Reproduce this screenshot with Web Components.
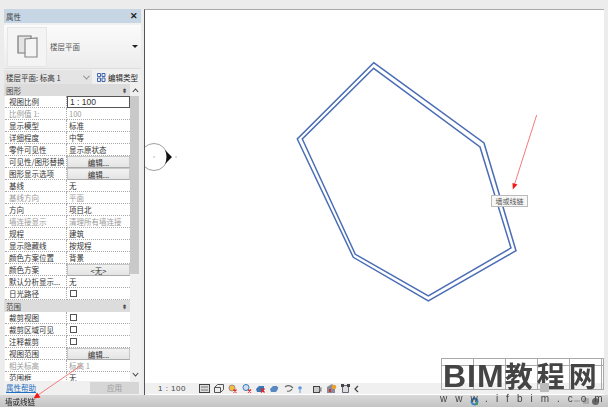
<!DOCTYPE html>
<html lang="zh"><head><meta charset="utf-8"><title>属性</title>
<style>
html,body{margin:0;padding:0;background:#ececec}
body{width:608px;height:407px;overflow:hidden;font:7.5px "Noto Sans CJK SC","Liberation Sans",sans-serif;color:#333}
</style></head><body>
<x-app>
  <x-props slot="left">
    <x-row kind="active">视图比例<span slot="v">1 : 100</span></x-row>
    <x-row dim>比例值 1:<span slot="v">100</span></x-row>
    <x-row>显示模型<span slot="v">标准</span></x-row>
    <x-row>详细程度<span slot="v">中等</span></x-row>
    <x-row>零件可见性<span slot="v">显示原状态</span></x-row>
    <x-row kind="btn">可见性/图形替换<span slot="v">编辑...</span></x-row>
    <x-row kind="btn">图形显示选项<span slot="v">编辑...</span></x-row>
    <x-row>基线<span slot="v">无</span></x-row>
    <x-row dim>基线方向<span slot="v">平面</span></x-row>
    <x-row>方向<span slot="v">项目北</span></x-row>
    <x-row dim>墙连接显示<span slot="v">清理所有墙连接</span></x-row>
    <x-row>规程<span slot="v">建筑</span></x-row>
    <x-row>显示隐藏线<span slot="v">按规程</span></x-row>
    <x-row>颜色方案位置<span slot="v">背景</span></x-row>
    <x-row kind="btn">颜色方案<span slot="v">&lt;无&gt;</span></x-row>
    <x-row>默认分析显示...<span slot="v">无</span></x-row>
    <x-row kind="check">日光路径</x-row>
    <x-group>范围</x-group>
    <x-row kind="check">裁剪视图</x-row>
    <x-row kind="check">裁剪区域可见</x-row>
    <x-row kind="check">注释裁剪</x-row>
    <x-row kind="btn">视图范围<span slot="v">编辑...</span></x-row>
    <x-row dim>相关标高<span slot="v">标高 1</span></x-row>
    <x-row>范围框<span slot="v">无</span></x-row>
  </x-props>
  <x-view slot="right"></x-view>
  <x-status slot="bottom">墙或线链</x-status>
  <x-mark slot="over"></x-mark>
</x-app>
<template id="t-app"><style>
:host{display:block;position:relative;width:608px;height:407px;overflow:hidden;filter:blur(.45px)}
.top{display:grid;grid-template-columns:137px 460px;column-gap:3px;padding:9px 4px 0 4px;height:395px;box-sizing:border-box}
</style><div class="top"><slot name="left"></slot><slot name="right"></slot></div><slot name="bottom"></slot><slot name="over"></slot>
<svg style="position:absolute;left:0;top:0;pointer-events:none" width="608" height="407" viewBox="0 0 608 407">
<g stroke="#f47a7a" stroke-width="1" fill="#f01818"><path d="M536.7 115 514 186" fill="none"/><path d="M512.8 189.5 512.500 183 517.500 184.500Z" stroke="none"/>
<path d="M81.7 365 38 395" fill="none"/><path d="M33.5 398.5 37 392.5 40.5 397.5Z" stroke="none"/></g></svg>
</template>
<template id="t-props"><style>
:host{display:flex;flex-direction:column;background:#f0f0f0;height:386px;overflow:hidden}
.head{height:14px;background:#c6d6e4;display:flex;align-items:center;justify-content:space-between;padding:0 3px 0 2px;font-size:7.5px;color:#444;flex:none}
.head b{font:bold 9px "Liberation Sans",sans-serif;color:#222}
.type{height:44px;margin-top:2px;flex:none;background:linear-gradient(#fbfbfb,#ececec);display:flex;align-items:center;gap:3px;padding:0 3px;box-sizing:border-box;border-bottom:1px solid #ddd}
.tile{width:40px;height:40px;background:#f4f4f4;border:1px solid #e6e6e6;box-sizing:border-box;display:flex;align-items:center;justify-content:center;flex:none}
.type span{flex:1;margin-left:0;color:#555}
.caret{width:0;height:0;border:3px solid transparent;border-top:3.5px solid #222;border-bottom:0}
.sel{display:flex;height:14px;margin-top:1px;flex:none}
.dd{width:88px;background:#e4e4e4;display:flex;align-items:center;justify-content:space-between;padding:0 3px 0 2px;box-sizing:border-box}
.dd i{width:4px;height:4px;border:solid #888;border-width:0 1px 1px 0;transform:rotate(45deg) translate(-1px,-1px);display:block}
.et{flex:1;display:flex;align-items:center;gap:2px;padding-left:5px;color:#222;white-space:nowrap}
.body{display:grid;grid-template-columns:126px 11px;height:297px;flex:none}
.rows{display:flex;flex-direction:column;height:297px;overflow:hidden}
.gh{height:12px;background:#dcdcdc;display:flex;align-items:center;justify-content:space-between;padding:0 3px 0 2px;flex:none;color:#444}
.gh s{text-decoration:none;font:bold 6px "Liberation Sans",sans-serif}
.sb{background:#f0f0f0;display:flex;flex-direction:column;align-items:stretch}
.ar{height:12px;display:flex;align-items:center;justify-content:center;flex:none}
.thumb{height:178px;background:#c9c9c9;margin-right:2px;flex:none}
.foot{height:13px;display:flex;align-items:center;justify-content:space-between;padding:0 2px;flex:none}
.foot a{color:#1f6fc0;text-decoration:underline}
.foot span{width:49px;height:12px;background:#d6d6d6;color:#9a9a9a;display:flex;align-items:center;justify-content:center}
</style>
<div class="head"><span>属性</span><b>✕</b></div>
<div class="type"><div class="tile"><svg width="21" height="23" viewBox="0 0 21 23"><path d="M1 18V1h13v17Z" fill="#e4e4e4" stroke="#777" stroke-width="1.200"/><path d="M8 22V4l12-1v19Z" fill="#f4f4f4" stroke="#888" stroke-width="1.200"/></svg></div><span>楼层平面</span><div class="caret"></div></div>
<div class="sel"><div class="dd">楼层平面: 标高 1<i></i></div><div class="et"><svg width="9" height="9" viewBox="0 0 9 9"><path d="M.5.500h3v3h-3zM5 .5h3v3H5zM.5 5h3v3.500h-3zM5 5h3v3.500H5z" fill="#e8f0f8" stroke="#46a"/></svg><span>编辑类型</span></div></div>
<div class="body"><div class="rows"><div class="gh">图形<s>⇞</s></div><slot></slot></div>
<div class="sb"><div class="ar"><svg width="7" height="5"><path d="M.8 4 3.500 1 6.200 4" fill="none" stroke="#444" stroke-width="1.100"/></svg></div><div class="thumb"></div><div style="flex:1"></div><div class="ar" style="margin-bottom:1px"><svg width="7" height="5"><path d="M.8 1 3.500 4 6.200 1" fill="none" stroke="#444" stroke-width="1.100"/></svg></div></div></div>
<div class="foot"><a>属性帮助</a><span>应用</span></div>
</template>
<template id="t-group"><style>
:host{display:flex;height:12px;background:#dcdcdc;align-items:center;justify-content:space-between;padding:0 3px 0 2px;flex:none;color:#444;box-sizing:border-box;font-size:7.5px}
s{text-decoration:none;font:bold 6px "Liberation Sans",sans-serif}
</style><slot></slot><s>⇞</s></template>
<template id="t-row"><style>
:host{display:grid;grid-template-columns:62px 63px;height:12px;flex:none;background:#f0f0f0;padding-left:1px;box-sizing:border-box;line-height:11px;color:#333}
.l,.v{background:#fff;border-bottom:1px dotted #aaa;box-sizing:border-box;white-space:nowrap;overflow:hidden;height:12px;display:flex;align-items:center}
.l{padding-left:4px;border-right:1px dotted #aaa}
.v{padding-left:2px}
:host([dim]) .l,:host([dim]) .v{color:#9a9a9a}
:host([kind=btn]) .v{background:linear-gradient(#f2f2f2,#e4e4e4);border:1px solid #c8c8c8;border-bottom-color:#aaa;justify-content:center;padding:0}
:host([kind=active]) .v{border:1px solid #555;background:#fff;font-size:8.5px;font-family:"Liberation Sans",sans-serif;padding-left:2px}
.ck{width:7px;height:7px;border:1px solid #555;background:#fff;box-sizing:border-box;margin-left:1px}
.ck[hidden]{display:none}
</style><div class="l"><slot></slot></div><div class="v"><slot name="v"></slot><span class="ck" hidden></span></div></template>
<template id="t-view"><style>
:host{display:flex;flex-direction:column;height:386px;background:#fff;border-left:1px solid #555;border-top:1px solid #aaa;box-sizing:border-box}
.cv{flex:1;position:relative;overflow:hidden;background:#fff;min-height:0}
svg.draw{display:block}
.tip{position:absolute;left:346px;top:185px;width:37px;height:12px;background:#f7f7f7;border:1px solid #bbb;box-sizing:border-box;font-size:7px;color:#555;display:flex;align-items:center;justify-content:center;white-space:nowrap}
.bar{height:11px;flex:none;background:#f0f0f0;display:flex;align-items:center;padding-left:13px;margin-bottom:1px;color:#444;font:8px "Liberation Sans",sans-serif}
.bar>span:first-child{letter-spacing:.5px;width:28px;white-space:nowrap}
.ics{display:flex;align-items:center;margin-left:13px;gap:3.500px}
.ics svg{display:block;flex:none}
</style><div class="cv">
<svg class="draw" width="459" height="373" viewBox="145 10 459 373" fill="none">
<circle cx="154" cy="157" r="13.500" stroke="#888" stroke-width=".8"/><path d="M165 150 172 157 165 164Q168 157 165 150Z" fill="#111"/><rect x="153.500" y="156.500" width="1" height="1" fill="#777"/><rect x="175.500" y="156.500" width="1" height="1" fill="#777"/>
<g stroke="#4a6db5" stroke-width="1.500"><path d="M373.700 62.700 484 143 516 250.700 428.300 301 353.300 257.300 297.300 139Z"/><path d="M373.700 68.300 480 147 511 248 428.300 296 355.300 254.300 302.300 139Z"/></g>
</svg><div class="tip">墙或线链</div></div>
<div class="bar"><span>1 : 100</span><span class="ics">
<svg width="11" height="9"><rect x=".5" y=".5" width="10" height="8" fill="#ddd" stroke="#444"/><path d="M2 3h7M2 6h7" stroke="#777"/></svg>
<svg width="10" height="9"><path d="M.5 3.500h6v5h-6zM.5 3.500l3-3h6v5l-3 3" fill="#eee" stroke="#555"/></svg>
<svg width="9" height="9" style="margin-left:1px"><circle cx="4" cy="4" r="3" fill="#f0c040" stroke="#a87"/><path d="M5.500 5.500l3 3m0-3-3 3" stroke="#d22" stroke-width="1.300"/></svg>
<svg width="10" height="9" style="margin-left:1px"><circle cx="4" cy="3.500" r="3" fill="#cfe0f2" stroke="#3a78b8"/><path d="M6 5.500l3 3m0-3-3 3" stroke="#d22" stroke-width="1.300"/></svg>
<svg width="10" height="9" style="margin-left:1px"><path d="M0 5 3 2h5v3l-2 3H1z" fill="#3a78b8"/><path d="M5 4.500l3.500 4m0-4-3.500 4" stroke="#d22" stroke-width="1.300"/></svg>
<svg width="10" height="9"><path d="M0 5 3 2h5v3l-2 3H1z" fill="#5a88c0"/><path d="M6 1l3 3" stroke="#ddd"/></svg>
<svg width="10" height="9" style="margin-left:1px"><path d="M1 3q4-3 8 1M3 7q3 1 5-2" fill="none" stroke="#666" stroke-width="1.200"/></svg>
<svg width="4" height="8"><circle cx="2" cy="3" r="1.800" fill="#5a9ad8"/><path d="M2 5v3" stroke="#5a9ad8"/></svg>
<svg width="9" height="8" style="margin-left:8px"><rect x=".5" y="1.500" width="6" height="6" fill="#ccc" stroke="#444"/><path d="M6.500 3 8.500 2V7L6.500 6" fill="#888"/></svg>
<svg width="10" height="9" style="margin-left:1px"><path d="M0 9V3l5-3 3 3v6z" fill="#8a8a9a"/><circle cx="7" cy="3" r="2.300" fill="#e8a030"/><rect x="2" y="5" width="2" height="3" fill="#c33"/></svg>
<svg width="9" height="10" style="margin-left:1px"><path d="M1.500 1.500h6v7h-6z" fill="#ddd" stroke="#667"/><rect x="0" y="0" width="3" height="3" fill="#444"/><rect x="6" y="0" width="3" height="3" fill="#444"/></svg>
<svg width="5" height="8"><path d="M4 1 1 4l3 3" fill="none" stroke="#444" stroke-width="1.200"/></svg>
</span></div></template>
<template id="t-status"><style>
:host{display:flex;align-items:center;height:12px;padding-left:5px;background:linear-gradient(#d9d9d9,#c4c4c4);color:#222;font-size:7.5px}
.gap{width:435px;flex:none}
.r{margin-left:auto;margin-right:9px;display:flex;gap:3px}
svg{display:block}
</style><slot></slot><span class="gap"></span><svg width="9" height="9" viewBox="0 0 9 9"><circle cx="4.500" cy="4.500" r="3" fill="none" stroke="#2f82c8" stroke-width="1.800"/><circle cx="6.500" cy="6.500" r="1.500" fill="#4a9a5a"/></svg><span class="r"><svg width="6" height="6"><path d="M0 3h6" stroke="#999"/></svg><svg width="6" height="6"><rect width="6" height="6" fill="#aaa"/></svg><svg width="7" height="7"><circle cx="3.500" cy="3.500" r="3.500" fill="#666"/></svg></span></template>
<template id="t-mark"><style>
:host{display:block;position:absolute;left:441px;top:358px;width:163px;height:49px;color:#444}
.g{height:32px;box-sizing:border-box;border:1px solid #aaa;display:flex;align-items:center;padding:3px 0 0 1px;background-image:repeating-linear-gradient(90deg,transparent 0 31px,#aaa 31px 32px),linear-gradient(transparent 6px,#aaa 6px 7px,transparent 7px);white-space:nowrap}
.g b{font:bold 32px/24px "Liberation Sans","Noto Sans CJK SC",sans-serif;letter-spacing:1px}
.g b i{font:bold 28px/24px "Noto Sans CJK SC",sans-serif;letter-spacing:4px}
.u{font:10px/12px "Liberation Sans",sans-serif;letter-spacing:8px;white-space:nowrap;margin-top:3px;margin-left:-1px;color:#444}
.u span{letter-spacing:0}
.sq{position:absolute;left:99px;top:25px;width:9px;height:9px;background:#bbb}
</style><div class="g"><b>BIM<i>教程网</i></b></div><div class="sq"></div><div class="u">www.ifbim.co<span>m</span></div></template>
<script>
function def(name,tid,init){customElements.define(name,class extends HTMLElement{constructor(){super();const s=this.attachShadow({mode:"open"});s.appendChild(document.getElementById(tid).content.cloneNode(true));if(init)init(this,s)}})}
def("x-app","t-app");
def("x-props","t-props");
def("x-group","t-group");
def("x-row","t-row",function(h,s){if(h.getAttribute("kind")==="check")s.querySelector(".ck").hidden=false});
def("x-view","t-view");
def("x-status","t-status");
def("x-mark","t-mark");
</script>
</body></html>
